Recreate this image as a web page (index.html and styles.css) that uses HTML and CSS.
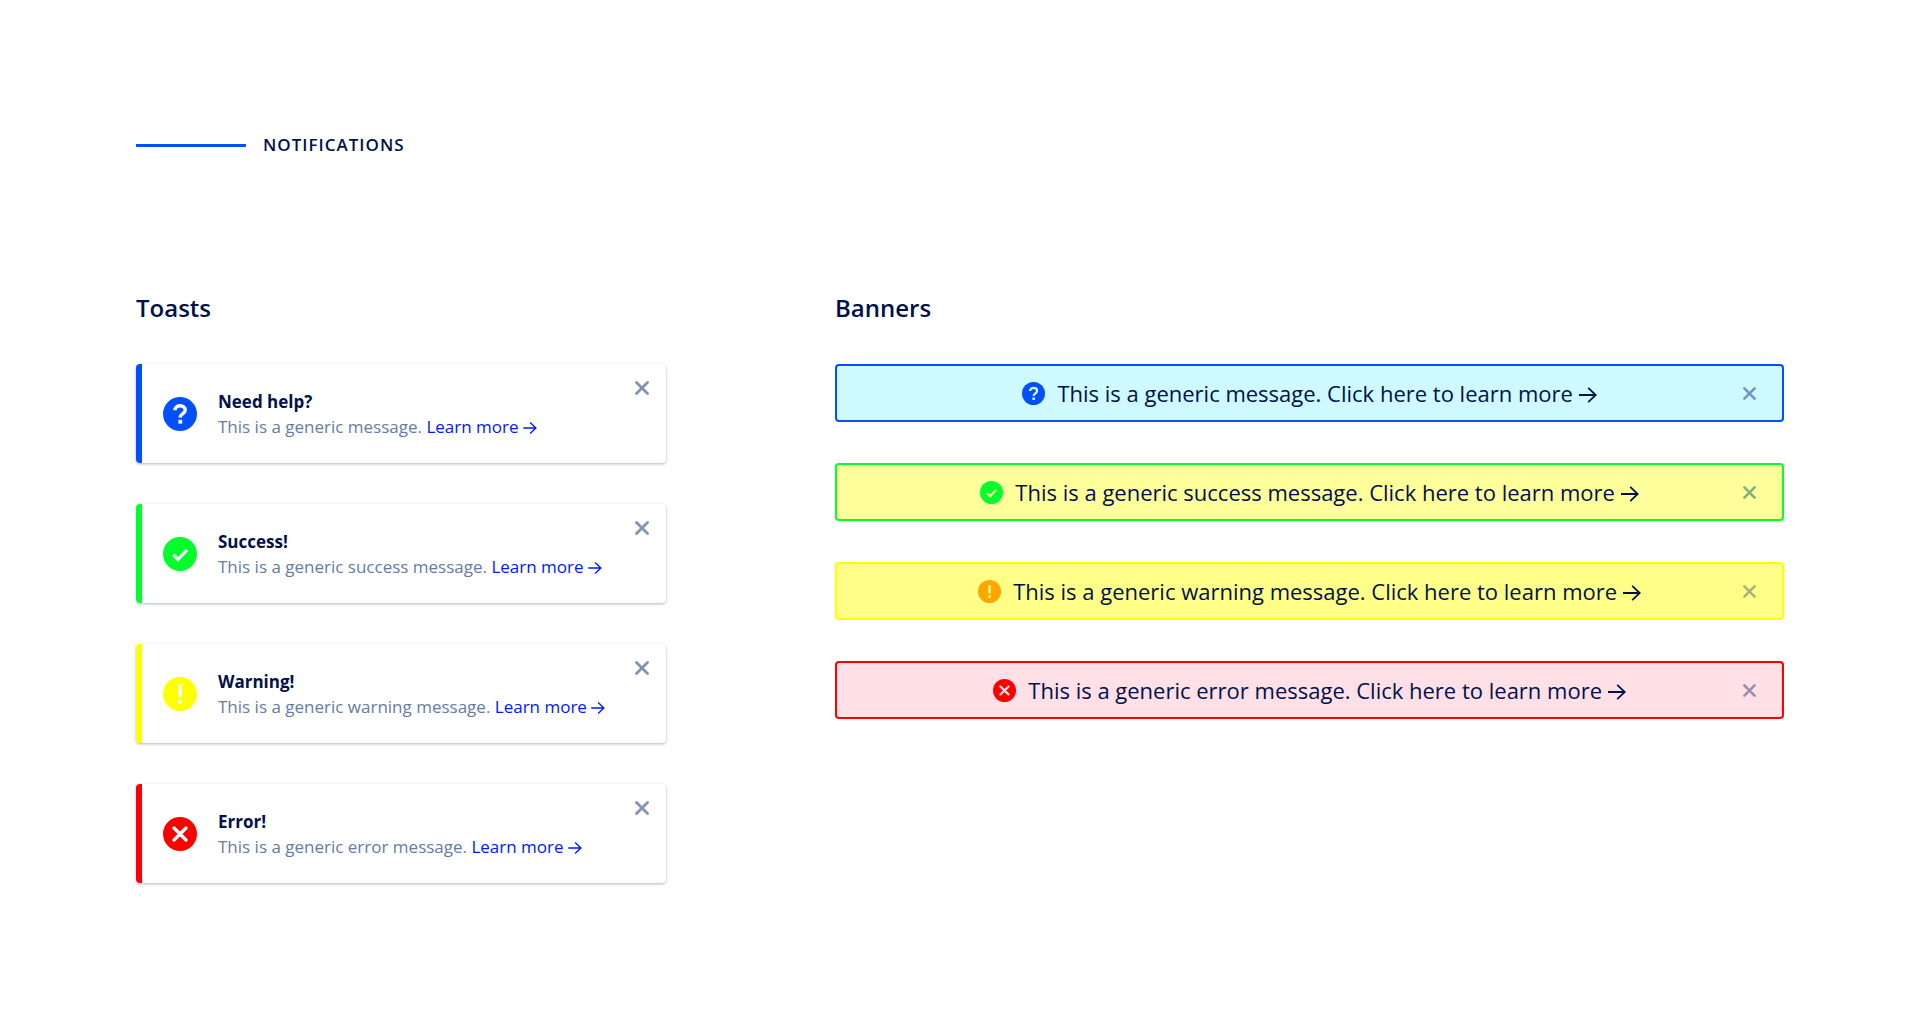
FILE: index.html
```html
<!DOCTYPE html>
<html lang="en">
<head>
<meta charset="utf-8">
<meta name="viewport" content="width=device-width, initial-scale=1">
<title>Notifications</title>
<link rel="stylesheet" href="styles.css">
</head>
<body>
<svg class="sprite" aria-hidden="true">
  <symbol id="i-help" viewBox="0 0 34 34"><path d="M12 13.2C12 7.2 22.2 7.4 22.2 13.2C22.2 16.8 17.2 16.7 17.2 20.6" fill="none" stroke="currentColor" stroke-width="3.4"/><rect x="15.4" y="22.8" width="3.8" height="3.8" fill="currentColor"/></symbol>
  <symbol id="i-check" viewBox="0 0 34 34"><path d="M10.2 17.6L15 22.4L24 12.8" fill="none" stroke="currentColor" stroke-width="3.2"/></symbol>
  <symbol id="i-warn" viewBox="0 0 34 34"><rect x="15.3" y="7.5" width="3.6" height="12.2" fill="currentColor"/><rect x="15.3" y="22.6" width="3.6" height="3.8" fill="currentColor"/></symbol>
  <symbol id="i-error" viewBox="0 0 34 34"><path d="M11 11L23 23M23 11L11 23" fill="none" stroke="currentColor" stroke-width="3.4" stroke-linecap="round"/></symbol>
  <symbol id="i-close" viewBox="0 0 14 14"><path d="M1.5 1.5L12.5 12.5M12.5 1.5L1.5 12.5" fill="none" stroke="currentColor" stroke-width="2.8" stroke-linecap="round"/></symbol>
  <symbol id="i-arrow" viewBox="0 0 18 16"><path d="M0 8H16.6M9.2 .8L16.8 8L9.2 15.2" fill="none" stroke="currentColor" stroke-width="1.8"/></symbol>
</svg>
<main class="page">
  <h1 class="title">Notifications</h1>
  <div class="columns">
    <section>
      <h2 class="heading">Toasts</h2>
      <div class="toasts">
        <article class="toast info">
          <svg class="badge"><use href="#i-help"/></svg>
          <div class="body"><h3 class="name">Need help?</h3>
          <p class="text">This is a generic message. <a href="#">Learn more <svg class="arrow"><use href="#i-arrow"/></svg></a></p></div>
          <button class="close" aria-label="Close"><svg><use href="#i-close"/></svg></button>
        </article>
        <article class="toast success">
          <svg class="badge"><use href="#i-check"/></svg>
          <div class="body"><h3 class="name">Success!</h3>
          <p class="text">This is a generic success message. <a href="#">Learn more <svg class="arrow"><use href="#i-arrow"/></svg></a></p></div>
          <button class="close" aria-label="Close"><svg><use href="#i-close"/></svg></button>
        </article>
        <article class="toast warning">
          <svg class="badge"><use href="#i-warn"/></svg>
          <div class="body"><h3 class="name">Warning!</h3>
          <p class="text">This is a generic warning message. <a href="#">Learn more <svg class="arrow"><use href="#i-arrow"/></svg></a></p></div>
          <button class="close" aria-label="Close"><svg><use href="#i-close"/></svg></button>
        </article>
        <article class="toast error">
          <svg class="badge"><use href="#i-error"/></svg>
          <div class="body"><h3 class="name">Error!</h3>
          <p class="text">This is a generic error message. <a href="#">Learn more <svg class="arrow"><use href="#i-arrow"/></svg></a></p></div>
          <button class="close" aria-label="Close"><svg><use href="#i-close"/></svg></button>
        </article>
      </div>
    </section>
    <section>
      <h2 class="heading">Banners</h2>
      <div class="banners">
        <div class="banner info">
          <a class="message" href="#"><svg class="badge"><use href="#i-help"/></svg><span>This is a generic message. Click here to learn more <svg class="arrow"><use href="#i-arrow"/></svg></span></a>
          <button class="close" aria-label="Close"><svg><use href="#i-close"/></svg></button>
        </div>
        <div class="banner success">
          <a class="message" href="#"><svg class="badge"><use href="#i-check"/></svg><span>This is a generic success message. Click here to learn more <svg class="arrow"><use href="#i-arrow"/></svg></span></a>
          <button class="close" aria-label="Close"><svg><use href="#i-close"/></svg></button>
        </div>
        <div class="banner warning">
          <a class="message" href="#"><svg class="badge"><use href="#i-warn"/></svg><span>This is a generic warning message. Click here to learn more <svg class="arrow"><use href="#i-arrow"/></svg></span></a>
          <button class="close" aria-label="Close"><svg><use href="#i-close"/></svg></button>
        </div>
        <div class="banner error">
          <a class="message" href="#"><svg class="badge"><use href="#i-error"/></svg><span>This is a generic error message. Click here to learn more <svg class="arrow"><use href="#i-arrow"/></svg></span></a>
          <button class="close" aria-label="Close"><svg><use href="#i-close"/></svg></button>
        </div>
      </div>
    </section>
  </div>
</main>
</body>
</html>
```
FILE: styles.css
```css
* { box-sizing: border-box; }
body { margin: 0; background: #fff; color: #00114b; font-family: "Open Sans", sans-serif; }
h1, h2, h3, p { margin: 0; }
a { text-decoration: none; }
.sprite { display: none; }

.page { padding: 135px 136px; }
.title {
  display: flex; align-items: center; gap: 17px;
  font-size: 17px; line-height: 20px; font-weight: 600;
  letter-spacing: 1px; text-transform: uppercase;
}
.title::before { content: ""; width: 110px; height: 3px; background: #0050ff; }
.columns {
  display: grid; grid-template-columns: 530fr 949fr; column-gap: 169px;
  margin-top: 137px;
}
.heading { font-size: 24px; line-height: 32px; font-weight: 600; margin-bottom: 40px; }

.info { --accent: #0050ff; --fill: #cdf9ff; --mark: #0050ff; --x: #7094c8; }
.success { --accent: #00ff2b; --fill: #ffff9b; --mark: #00ff2b; --x: #80b080; }
.warning { --accent: #ffff00; --fill: #ffff87; --mark: #ffa500; --x: #a5b678; }
.error { --accent: #ff0000; --fill: #ffe0e7; --mark: #ff0000; --x: #9690ad; }

.badge { flex: none; border-radius: 50%; }
.close {
  display: flex; padding: 0; border: 0; background: none; cursor: pointer;
}

.toasts, .banners { display: grid; gap: 41px; }
.toast {
  display: flex; align-items: center; gap: 21px; min-height: 99px;
  padding: 0 17px 0 21px; border-left: 6px solid var(--accent); border-radius: 4px;
  box-shadow: 0 1px 3px rgba(70, 100, 150, .45);
}
.toast .badge { width: 34px; height: 34px; background: var(--accent); color: #fff; }
.body { flex: 1; }
.name { font-size: 17px; line-height: 25px; font-weight: 700; }
.text { font-size: 17px; line-height: 25px; color: #667ca2; }
.text a { color: #0018ff; }
.text .arrow { width: 14px; height: 12px; vertical-align: -1px; }
.toast .close { align-self: flex-start; margin-top: 17px; color: #8291b4; }
.toast .close svg { width: 14px; height: 14px; }

.banner {
  display: grid; grid-template-columns: 1fr auto 1fr; align-items: center;
  min-height: 58px; padding: 0 26px; border: 2px solid var(--accent);
  border-radius: 4px; background: var(--fill);
}
.message {
  grid-column: 2; display: flex; align-items: center; gap: 12px;
  color: inherit; font-size: 22px; line-height: 28px;
}
.banner .badge { width: 23px; height: 23px; background: var(--mark); color: var(--fill); }
.message .arrow { width: 18px; height: 16px; vertical-align: -1px; }
.banner .close { justify-self: end; color: var(--x); }
.banner .close svg { width: 13px; height: 13px; }
```
